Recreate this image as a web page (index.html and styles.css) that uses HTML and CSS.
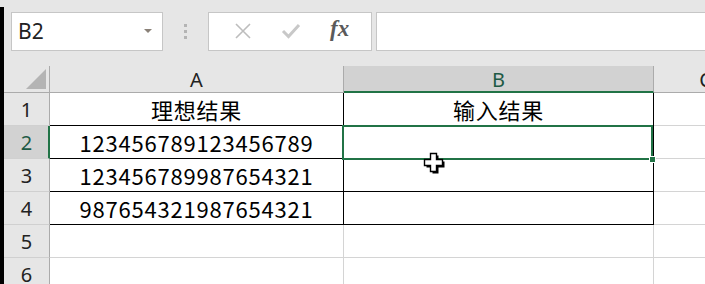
FILE: index.html
```html
<!DOCTYPE html>
<html lang="zh-CN">
<head>
  <meta charset="UTF-8">
  <title>Excel</title>
  <link rel="stylesheet" href="styles.css">
</head>
<body>
  <div class="frame">
    <div class="edge"></div>
    <div class="main">
      <div class="toolbar">
        <div class="namebox">
          <span class="name">B2</span>
          <span class="arrow"></span>
        </div>
        <div class="dots"><i></i><i></i><i></i></div>
        <div class="fbuttons">
          <svg class="ico" width="20" height="20" viewBox="0 0 20 20">
            <path d="M3 3 L17 17 M17 3 L3 17" stroke="#bdbdbd" stroke-width="1.6" fill="none"/>
          </svg>
          <svg class="ico" width="22" height="20" viewBox="0 0 22 20">
            <path d="M3 10 L8.5 15.5 L19 4" stroke="#c8c8c8" stroke-width="3" fill="none"/>
          </svg>
          <span class="fx">fx</span>
        </div>
        <div class="formula"></div>
      </div>

      <div class="sheet">
        <div class="corner"><span class="tri"></span></div>
        <div class="colhead">A</div>
        <div class="colhead sel">B</div>
        <div class="colhead">C</div>

        <div class="rowhead">1</div>
        <div class="cell bd">理想结果</div>
        <div class="cell bd">输入结果</div>
        <div class="cell"></div>

        <div class="rowhead sel">2</div>
        <div class="cell bd">123456789123456789</div>
        <div class="cell bd"></div>
        <div class="cell"></div>

        <div class="rowhead">3</div>
        <div class="cell bd">123456789987654321</div>
        <div class="cell bd"></div>
        <div class="cell"></div>

        <div class="rowhead">4</div>
        <div class="cell bd">987654321987654321</div>
        <div class="cell bd"></div>
        <div class="cell"></div>

        <div class="rowhead">5</div>
        <div class="cell"></div>
        <div class="cell"></div>
        <div class="cell"></div>

        <div class="rowhead">6</div>
        <div class="cell"></div>
        <div class="cell"></div>
        <div class="cell"></div>

        <div class="selection"></div>
        <div class="handle"></div>
        <svg class="cursor" width="24" height="24" viewBox="0 0 24 24">
          <path d="M9.5 3.5 H15.5 V9.5 H21.5 V15.5 H15.5 V21.5 H9.5 V15.5 H3.5 V9.5 H9.5 Z" fill="#000"/>
          <path d="M7.5 1.5 H13.5 V7.5 H19.5 V13.5 H13.5 V19.5 H7.5 V13.5 H1.5 V7.5 H7.5 Z" fill="#fff" stroke="#000" stroke-width="1.4"/>
        </svg>
      </div>
    </div>
  </div>
</body>
</html>
```

FILE: styles.css
```css
html, body {
  margin: 0;
  padding: 0;
  height: 100%;
  overflow: hidden;
}

body {
  background-color: #e6e6e6;
  font-family: "Noto Sans", "Open Sans", sans-serif;
}

.frame {
  display: flex;
  height: 100%;
}

.edge {
  width: 4px;
  margin-top: 7px;
  background-color: #000;
  flex-shrink: 0;
}

.main {
  flex: 1;
  min-width: 0;
}

/* formula bar */
.toolbar {
  display: flex;
  align-items: center;
  height: 66px;
  padding-bottom: 4px;
  box-sizing: border-box;
}

.namebox {
  margin-left: 7px;
  width: 152px;
  height: 39px;
  box-sizing: border-box;
  border: 1px solid #c6c6c6;
  background: #fff;
  display: flex;
  align-items: center;
  justify-content: space-between;
  padding: 0 10px 0 6px;
  font-size: 21px;
  color: #222;
}

.arrow {
  width: 0;
  height: 0;
  border-left: 4px solid transparent;
  border-right: 4px solid transparent;
  border-top: 4px solid #8a8178;
}

.dots {
  width: 45px;
  display: flex;
  flex-direction: column;
  align-items: center;
  gap: 3px;
}

.dots i {
  width: 3px;
  height: 3px;
  background: #b4b4b4;
}

.fbuttons {
  width: 164px;
  height: 39px;
  box-sizing: border-box;
  border: 1px solid #c6c6c6;
  background: #fff;
  display: flex;
  align-items: center;
  justify-content: space-around;
  padding: 0 8px 0 10px;
}

.fx {
  font-family: "Liberation Serif", serif;
  font-style: italic;
  font-weight: bold;
  font-size: 23px;
  color: #5a5a5a;
  padding-bottom: 4px;
}

.formula {
  flex: 1;
  margin-left: 4px;
  height: 39px;
  box-sizing: border-box;
  border: 1px solid #c6c6c6;
  border-right: none;
  background: #fff;
}

/* sheet */
.sheet {
  position: relative;
  display: grid;
  grid-template-columns: 46px 294px 310px 104px;
  grid-template-rows: 27px repeat(6, 33px);
  background: #fff;
}

.sheet > div {
  box-sizing: border-box;
}

.corner {
  background: #e6e6e6;
  border-right: 1px solid #ababab;
  border-bottom: 1px solid #ababab;
  position: relative;
}

.tri {
  position: absolute;
  right: 3px;
  bottom: 3px;
  width: 0;
  height: 0;
  border-left: 20px solid transparent;
  border-bottom: 20px solid #b4b4b4;
}

.colhead {
  background: #e6e6e6;
  border-right: 1px solid #ababab;
  border-bottom: 1px solid #ababab;
  display: flex;
  align-items: center;
  justify-content: center;
  font-size: 20px;
  color: #222;
}

.colhead.sel {
  background: #d2d2d2;
  color: #1e5a45;
  border-bottom: 2px solid #217346;
  padding-top: 1px;
}

.rowhead {
  background: #e6e6e6;
  border-right: 1px solid #ababab;
  border-bottom: 1px solid #d0d0d0;
  display: flex;
  align-items: center;
  justify-content: center;
  font-size: 20px;
  color: #222;
}

.rowhead.sel {
  background: #d2d2d2;
  color: #1e5a45;
  border-right: 2px solid #217346;
  padding-left: 1px;
}

.cell {
  border-right: 1px solid #d4d4d4;
  border-bottom: 1px solid #d4d4d4;
  display: flex;
  align-items: center;
  justify-content: center;
  font-family: "Noto Sans CJK SC", sans-serif;
  font-size: 22px;
  letter-spacing: 0.8px;
  color: #000;
}

.cell.bd {
  border-right-color: #000;
  border-bottom-color: #000;
}

.selection {
  position: absolute;
  left: 338px;
  top: 59px;
  width: 311px;
  height: 35px;
  border: 2px solid #217346;
  box-sizing: border-box;
}

.handle {
  position: absolute;
  left: 645px;
  top: 90px;
  width: 7px;
  height: 7px;
  background: #217346;
  border: 1px solid #fff;
}

.cursor {
  position: absolute;
  left: 419px;
  top: 86px;
}
```
